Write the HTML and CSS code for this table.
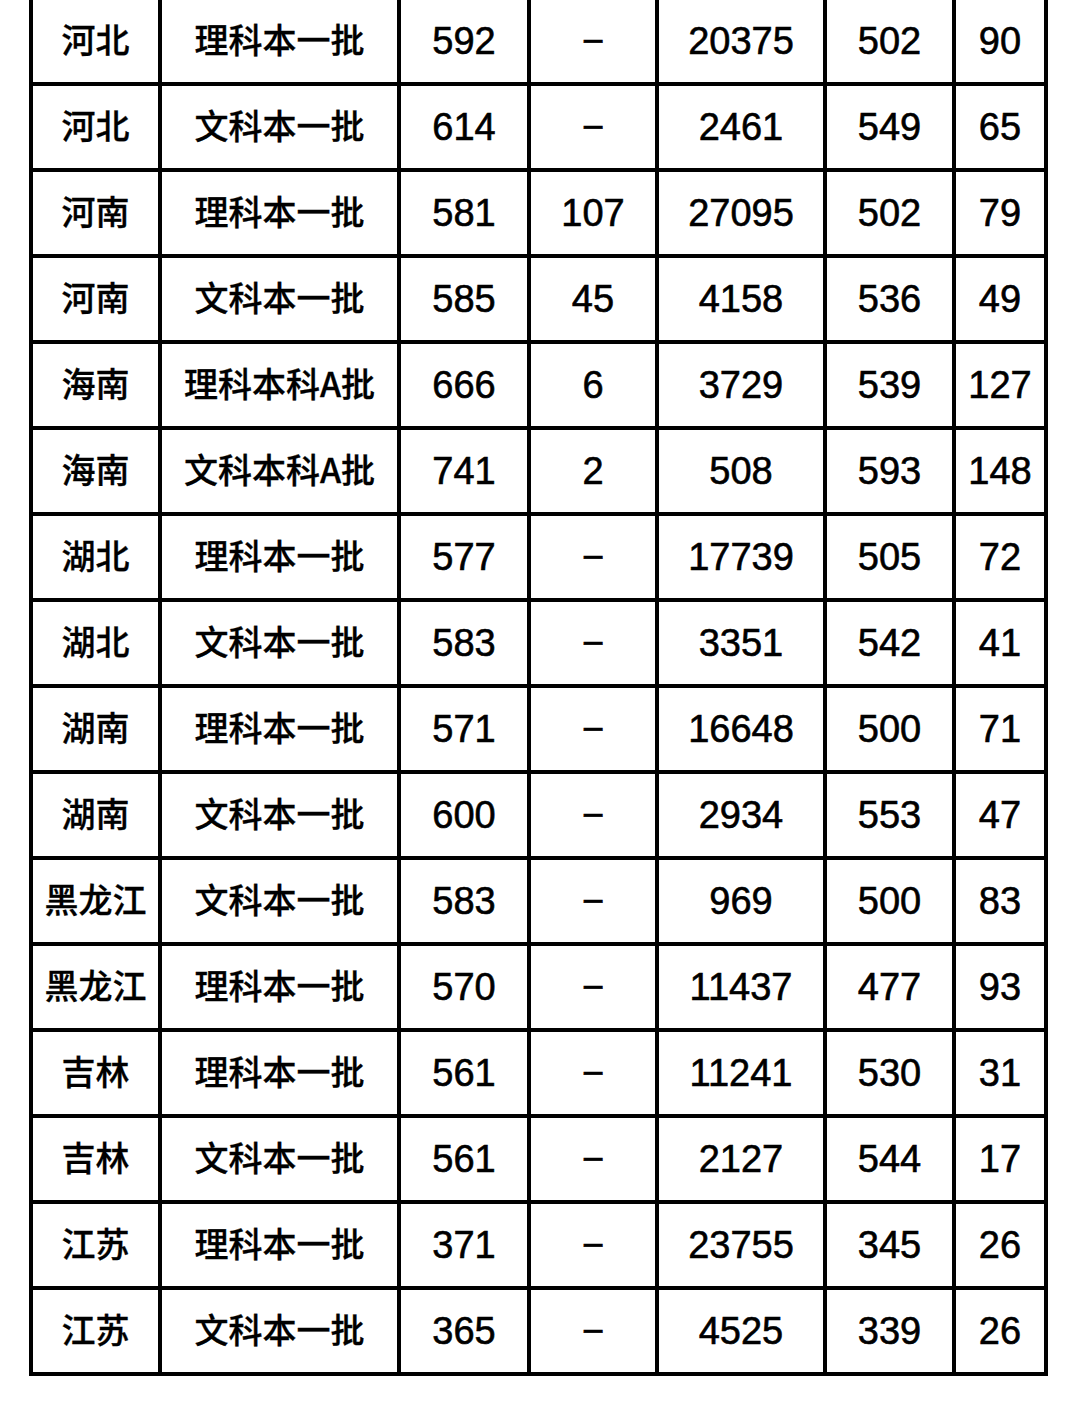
FILE: index.html
```html
<!DOCTYPE html>
<html lang="zh">
<head>
<meta charset="utf-8">
<title>录取分数</title>
<link rel="stylesheet" href="styles.css">
</head>
<body>
<div class="grid">
  <div class="c zh">河北</div><div class="c zh">理科本一批</div><div class="c n">592</div><div class="c n">−</div><div class="c n">20375</div><div class="c n">502</div><div class="c n">90</div>
  <div class="c zh">河北</div><div class="c zh">文科本一批</div><div class="c n">614</div><div class="c n">−</div><div class="c n">2461</div><div class="c n">549</div><div class="c n">65</div>
  <div class="c zh">河南</div><div class="c zh">理科本一批</div><div class="c n">581</div><div class="c n">107</div><div class="c n">27095</div><div class="c n">502</div><div class="c n">79</div>
  <div class="c zh">河南</div><div class="c zh">文科本一批</div><div class="c n">585</div><div class="c n">45</div><div class="c n">4158</div><div class="c n">536</div><div class="c n">49</div>
  <div class="c zh">海南</div><div class="c zh">理科本科A批</div><div class="c n">666</div><div class="c n">6</div><div class="c n">3729</div><div class="c n">539</div><div class="c n">127</div>
  <div class="c zh">海南</div><div class="c zh">文科本科A批</div><div class="c n">741</div><div class="c n">2</div><div class="c n">508</div><div class="c n">593</div><div class="c n">148</div>
  <div class="c zh">湖北</div><div class="c zh">理科本一批</div><div class="c n">577</div><div class="c n">−</div><div class="c n">17739</div><div class="c n">505</div><div class="c n">72</div>
  <div class="c zh">湖北</div><div class="c zh">文科本一批</div><div class="c n">583</div><div class="c n">−</div><div class="c n">3351</div><div class="c n">542</div><div class="c n">41</div>
  <div class="c zh">湖南</div><div class="c zh">理科本一批</div><div class="c n">571</div><div class="c n">−</div><div class="c n">16648</div><div class="c n">500</div><div class="c n">71</div>
  <div class="c zh">湖南</div><div class="c zh">文科本一批</div><div class="c n">600</div><div class="c n">−</div><div class="c n">2934</div><div class="c n">553</div><div class="c n">47</div>
  <div class="c zh">黑龙江</div><div class="c zh">文科本一批</div><div class="c n">583</div><div class="c n">−</div><div class="c n">969</div><div class="c n">500</div><div class="c n">83</div>
  <div class="c zh">黑龙江</div><div class="c zh">理科本一批</div><div class="c n">570</div><div class="c n">−</div><div class="c n">11437</div><div class="c n">477</div><div class="c n">93</div>
  <div class="c zh">吉林</div><div class="c zh">理科本一批</div><div class="c n">561</div><div class="c n">−</div><div class="c n">11241</div><div class="c n">530</div><div class="c n">31</div>
  <div class="c zh">吉林</div><div class="c zh">文科本一批</div><div class="c n">561</div><div class="c n">−</div><div class="c n">2127</div><div class="c n">544</div><div class="c n">17</div>
  <div class="c zh">江苏</div><div class="c zh">理科本一批</div><div class="c n">371</div><div class="c n">−</div><div class="c n">23755</div><div class="c n">345</div><div class="c n">26</div>
  <div class="c zh">江苏</div><div class="c zh">文科本一批</div><div class="c n">365</div><div class="c n">−</div><div class="c n">4525</div><div class="c n">339</div><div class="c n">26</div>
</div>
</body>
</html>
```
FILE: styles.css
```css
html, body {
  margin: 0;
  padding: 0;
  background: #fff;
}
body {
  width: 1080px;
  height: 1407px;
  overflow: hidden;
}
.grid {
  display: grid;
  grid-template-columns: 125px 235px 126px 124px 164px 125px 88px;
  grid-auto-rows: 82px;
  gap: 4px;
  padding: 4px;
  background: #000;
  width: max-content;
  margin: -4px 0 0 29px;
}
.c {
  background: #fff;
  color: #000;
  display: flex;
  align-items: center;
  justify-content: center;
  white-space: nowrap;
}
.zh {
  font-family: "Noto Sans CJK SC", "Noto Sans", sans-serif;
  font-weight: 500;
  font-size: 34px;
  padding-bottom: 6px;
  -webkit-text-stroke: 0.3px #000;
}
.n {
  font-family: "Liberation Sans", Arial, sans-serif;
  font-size: 38px;
  -webkit-text-stroke: 0.6px #000;
}
```
